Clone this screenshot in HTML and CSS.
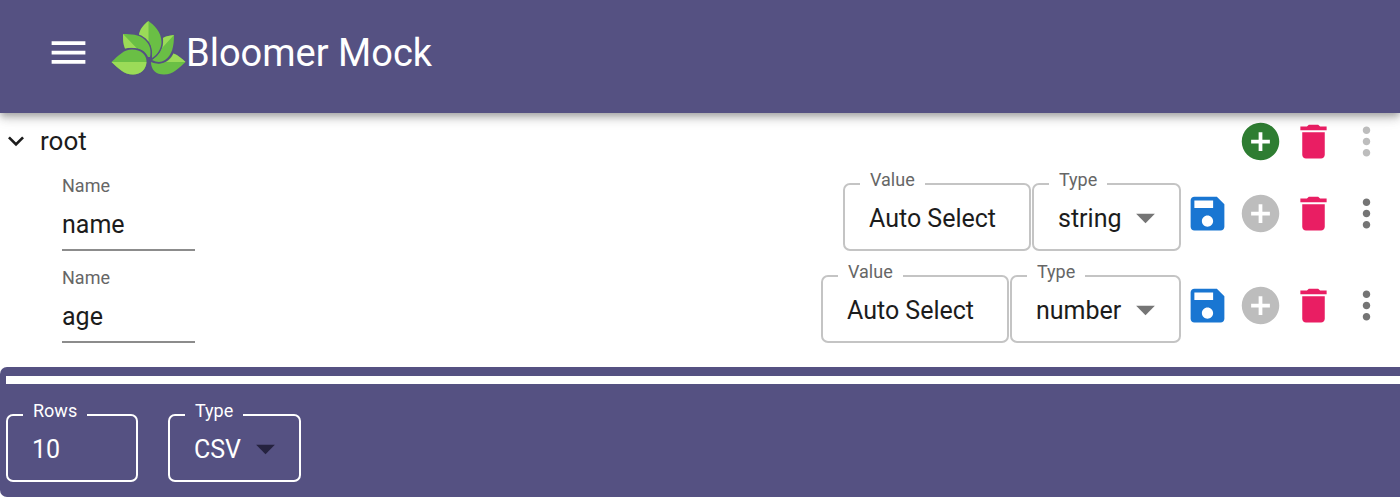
FILE: index.html
```html
<!DOCTYPE html>
<html lang="en">
<head>
    <meta charset="UTF-8">
    <meta name="viewport" content="width=device-width, initial-scale=1">
    <title>Bloomer Mock</title>
    <link rel="stylesheet" href="styles.css">
</head>
<body>
    <svg class="sprite" aria-hidden="true">
        <symbol id="icon-menu" viewBox="0 0 24 24"><path d="M3 18h18v-2H3v2zm0-5h18v-2H3v2zm0-7v2h18V6H3z"/></symbol>
        <symbol id="icon-expand" viewBox="0 0 24 24"><path d="M16.59 8.59L12 13.17 7.41 8.59 6 10l6 6 6-6z"/></symbol>
        <symbol id="icon-arrow" viewBox="0 0 24 24"><path d="M7 10l5 5 5-5z"/></symbol>
        <symbol id="icon-save" viewBox="0 0 24 24"><path d="M17 3H5c-1.11 0-2 .9-2 2v14c0 1.1.89 2 2 2h14c1.1 0 2-.9 2-2V7l-4-4zm-5 16c-1.66 0-3-1.34-3-3s1.34-3 3-3 3 1.34 3 3-1.34 3-3 3zm3-10H5V5h10v4z"/></symbol>
        <symbol id="icon-add" viewBox="0 0 24 24"><path d="M12 2C6.48 2 2 6.48 2 12s4.48 10 10 10 10-4.48 10-10S17.52 2 12 2zm5 11h-4v4h-2v-4H7v-2h4V7h2v4h4v2z"/></symbol>
        <symbol id="icon-delete" viewBox="0 0 24 24"><path d="M6 19c0 1.1.9 2 2 2h8c1.1 0 2-.9 2-2V7H6v12zM19 4h-3.5l-1-1h-5l-1 1H5v2h14V4z"/></symbol>
        <symbol id="icon-more" viewBox="0 0 24 24"><path d="M12 8c1.1 0 2-.9 2-2s-.9-2-2-2-2 .9-2 2 .9 2 2 2zm0 2c-1.1 0-2 .9-2 2s.9 2 2 2 2-.9 2-2-.9-2-2-2zm0 6c-1.1 0-2 .9-2 2s.9 2 2 2 2-.9 2-2-.9-2-2-2z"/></symbol>
    </svg>

    <header class="app-bar">
        <button class="icon-btn menu-btn" aria-label="Menu"><svg><use href="#icon-menu"/></svg></button>
        <svg class="logo" viewBox="0 0 75 66" aria-hidden="true">
            <!-- right petals -->
            <path class="leaf" d="M40 42C49 46 57 43 62.500 33.500C67 35 71 39 74.500 42C68 48 62 54.500 53 54.500C45 54.500 40 50 40 42z"/>
            <path class="leaf-light" d="M55 42C59 40 61 37 62.500 33.500C67 35 71 39 74.500 42z"/>
            <path class="leaf" d="M63 15C63 27 61 35 54 40C50 42.500 46 42.500 41 40C48 35 52 29 52 18C55 16 59 15.500 63 15z"/>
            <path class="leaf-light" d="M63 15L51 28C52 25 52.500 22 52 18C55 16 59 15.500 63 15z"/>
            <!-- top petal -->
            <path class="leaf" d="M37.500 1C43 5 50.500 12 50.500 22C50.500 29 46 35 41 38C41.500 28 39 20 28 15.500C28.500 10 32 5 37.500 1z"/>
            <path class="leaf-light" d="M37.500 1C32 5 28.500 10 28 15.500C32 17 35 19 37.500 22z"/>
            <!-- left petals -->
            <path class="leaf" d="M12 14C20 14 28 14.500 33 19C39 24 40.500 30 39 37L37 37C34 30 26 26 14 28.500C12 24 12 19 12 14z"/>
            <path class="leaf-light" d="M12 14L26 28.500C22 27.300 18 27.500 14 28.500C12 24 12 19 12 14z"/>
            <path class="leaf" d="M.5 42C8 35 13 29.500 21 29.500C30 29.500 35.500 35 35.500 41C35.500 49 30 54.500 22 54.500C13 54.500 7 48 .5 42z"/>
            <path class="leaf-light" d="M.5 42H35.500C35 49.500 30 54.500 22 54.500C13 54.500 7 48 .5 42z"/>
        </svg>
        <h1 class="title">Bloomer Mock</h1>
    </header>

    <main class="tree">
        <div class="tree-root">
            <button class="toggle"><svg><use href="#icon-expand"/></svg>root</button>
            <div class="actions">
                <button class="icon-btn add" aria-label="Add"><svg><use href="#icon-add"/></svg></button>
                <button class="icon-btn delete" aria-label="Delete"><svg><use href="#icon-delete"/></svg></button>
                <button class="icon-btn more" aria-label="More" disabled><svg><use href="#icon-more"/></svg></button>
            </div>
        </div>

        <div class="tree-row">
            <div class="name-field">
                <label for="name-1">Name</label>
                <input id="name-1" type="text" value="name">
            </div>
            <div class="row-fields">
                <fieldset class="field value-field">
                    <legend><label for="value-1">Value</label></legend>
                    <input id="value-1" type="text" value="Auto Select">
                </fieldset>
                <fieldset class="field select-field">
                    <legend><label for="type-1">Type</label></legend>
                    <select id="type-1"><option>string</option></select>
                    <svg class="arrow"><use href="#icon-arrow"/></svg>
                </fieldset>
            </div>
            <div class="actions">
                <button class="icon-btn save" aria-label="Save"><svg><use href="#icon-save"/></svg></button>
                <button class="icon-btn add" aria-label="Add" disabled><svg><use href="#icon-add"/></svg></button>
                <button class="icon-btn delete" aria-label="Delete"><svg><use href="#icon-delete"/></svg></button>
                <button class="icon-btn more" aria-label="More"><svg><use href="#icon-more"/></svg></button>
            </div>
        </div>

        <div class="tree-row">
            <div class="name-field">
                <label for="name-2">Name</label>
                <input id="name-2" type="text" value="age">
            </div>
            <div class="row-fields">
                <fieldset class="field value-field">
                    <legend><label for="value-2">Value</label></legend>
                    <input id="value-2" type="text" value="Auto Select">
                </fieldset>
                <fieldset class="field select-field">
                    <legend><label for="type-2">Type</label></legend>
                    <select id="type-2"><option>number</option></select>
                    <svg class="arrow"><use href="#icon-arrow"/></svg>
                </fieldset>
            </div>
            <div class="actions">
                <button class="icon-btn save" aria-label="Save"><svg><use href="#icon-save"/></svg></button>
                <button class="icon-btn add" aria-label="Add" disabled><svg><use href="#icon-add"/></svg></button>
                <button class="icon-btn delete" aria-label="Delete"><svg><use href="#icon-delete"/></svg></button>
                <button class="icon-btn more" aria-label="More"><svg><use href="#icon-more"/></svg></button>
            </div>
        </div>
    </main>

    <footer class="export-bar">
        <div class="progress"></div>
        <div class="export-fields">
            <fieldset class="field rows-field">
                <legend><label for="rows">Rows</label></legend>
                <input id="rows" type="text" inputmode="numeric" value="10">
            </fieldset>
            <fieldset class="field select-field">
                <legend><label for="format">Type</label></legend>
                <select id="format"><option>CSV</option></select>
                <svg class="arrow"><use href="#icon-arrow"/></svg>
            </fieldset>
        </div>
    </footer>
</body>
</html>
```
FILE: styles.css
```css
* {
    box-sizing: border-box;
}
body {
    margin: 0;
    background: #fff;
    color: #1c1c1c;
    font-family: Roboto, sans-serif;
    font-size: 25px;
}
button, input, select {
    font: inherit;
    color: inherit;
    background: none;
    border: none;
    border-radius: 0;
    margin: 0;
    padding: 0;
}
button {
    cursor: pointer;
}
svg {
    display: block;
    fill: currentColor;
}
.sprite {
    display: none;
}
.app-bar {
    display: flex;
    align-items: center;
    height: 113px;
    padding: 0 46px 8px;
    background: #555182;
    color: #fff;
    position: relative;
    box-shadow: 0 3px 6px -1px rgba(0,0,0,0.2), 0 6px 8px rgba(0,0,0,0.14), 0 2px 16px rgba(0,0,0,0.12);
}
.menu-btn {
    margin-right: 20px;
}
.logo {
    width: 75px;
    height: 66px;
}
.leaf {
    fill: #6abf45;
    stroke: #555182;
    stroke-width: 3px;
    paint-order: stroke;
}
.leaf-light {
    fill: #9bdb58;
}
.title {
    margin: 0;
    font-size: 38px;
    font-weight: 400;
}
.icon-btn, .icon-btn svg {
    width: 45px;
    height: 45px;
}
.tree {
    padding: 5px 11px 24px 0;
}
.tree-root {
    display: flex;
    justify-content: space-between;
    align-items: center;
    height: 46px;
    margin-bottom: 9px;
}
.toggle {
    display: flex;
    align-items: center;
    gap: 8px;
    font-size: 26px;
}
.toggle svg {
    width: 32px;
    height: 32px;
}
.tree-row {
    display: flex;
    align-items: center;
    padding-left: 62px;
}
.tree-row + .tree-row {
    margin-top: 14px;
}
.name-field {
    display: flex;
    flex-direction: column;
    width: 133px;
}
.name-field label {
    font-size: 18px;
    line-height: 26px;
    color: #666;
}
.name-field input {
    width: 100%;
    height: 52px;
    border-bottom: 2px solid #8c8c8c;
}
.row-fields {
    display: flex;
    gap: 1px;
    margin: 0 4px 0 auto;
}
.actions {
    display: flex;
    gap: 8px;
}
.tree-row .actions {
    padding-top: 3px;
}
.save {
    color: #1976d2;
}
.add {
    color: #2e7d32;
}
.delete {
    color: #e91e63;
}
.more {
    color: #757575;
}
.icon-btn:disabled {
    color: #bdbdbd;
    cursor: default;
}

/* outlined field, the label sits a little above the border line */
.field {
    position: relative;
    min-width: 0;
    margin: 0;
    padding: 0 0 8px;
    border: 2px solid #c4c4c4;
    border-radius: 7px;
}
.field legend {
    margin-left: 15px;
    padding: 0 10px 8px;
    font-size: 18px;
    line-height: 14px;
    color: #666;
}
.field legend label {
    display: block;
}
.field input, .field select {
    display: block;
    width: 100%;
    height: 46px;
    padding: 0 24px;
}
.field select {
    appearance: none;
    padding-right: 57px;
}
.value-field {
    width: 188px;
}
.rows-field {
    width: 132px;
}
.arrow {
    position: absolute;
    right: 11px;
    bottom: 9px;
    width: 45px;
    height: 45px;
    color: #757575;
    pointer-events: none;
}
.export-bar {
    padding: 9px 0 15px 6px;
    border-radius: 7px 0 0 7px;
    background: #555182;
    color: #fff;
}
.progress {
    height: 8px;
    margin-bottom: 20px;
    background: #fff;
}
.export-fields {
    display: flex;
    gap: 30px;
}
.export-bar .field {
    border-color: #fff;
}
.export-bar legend {
    color: #fff;
}
.export-bar .arrow {
    color: #25223f;
}
```
